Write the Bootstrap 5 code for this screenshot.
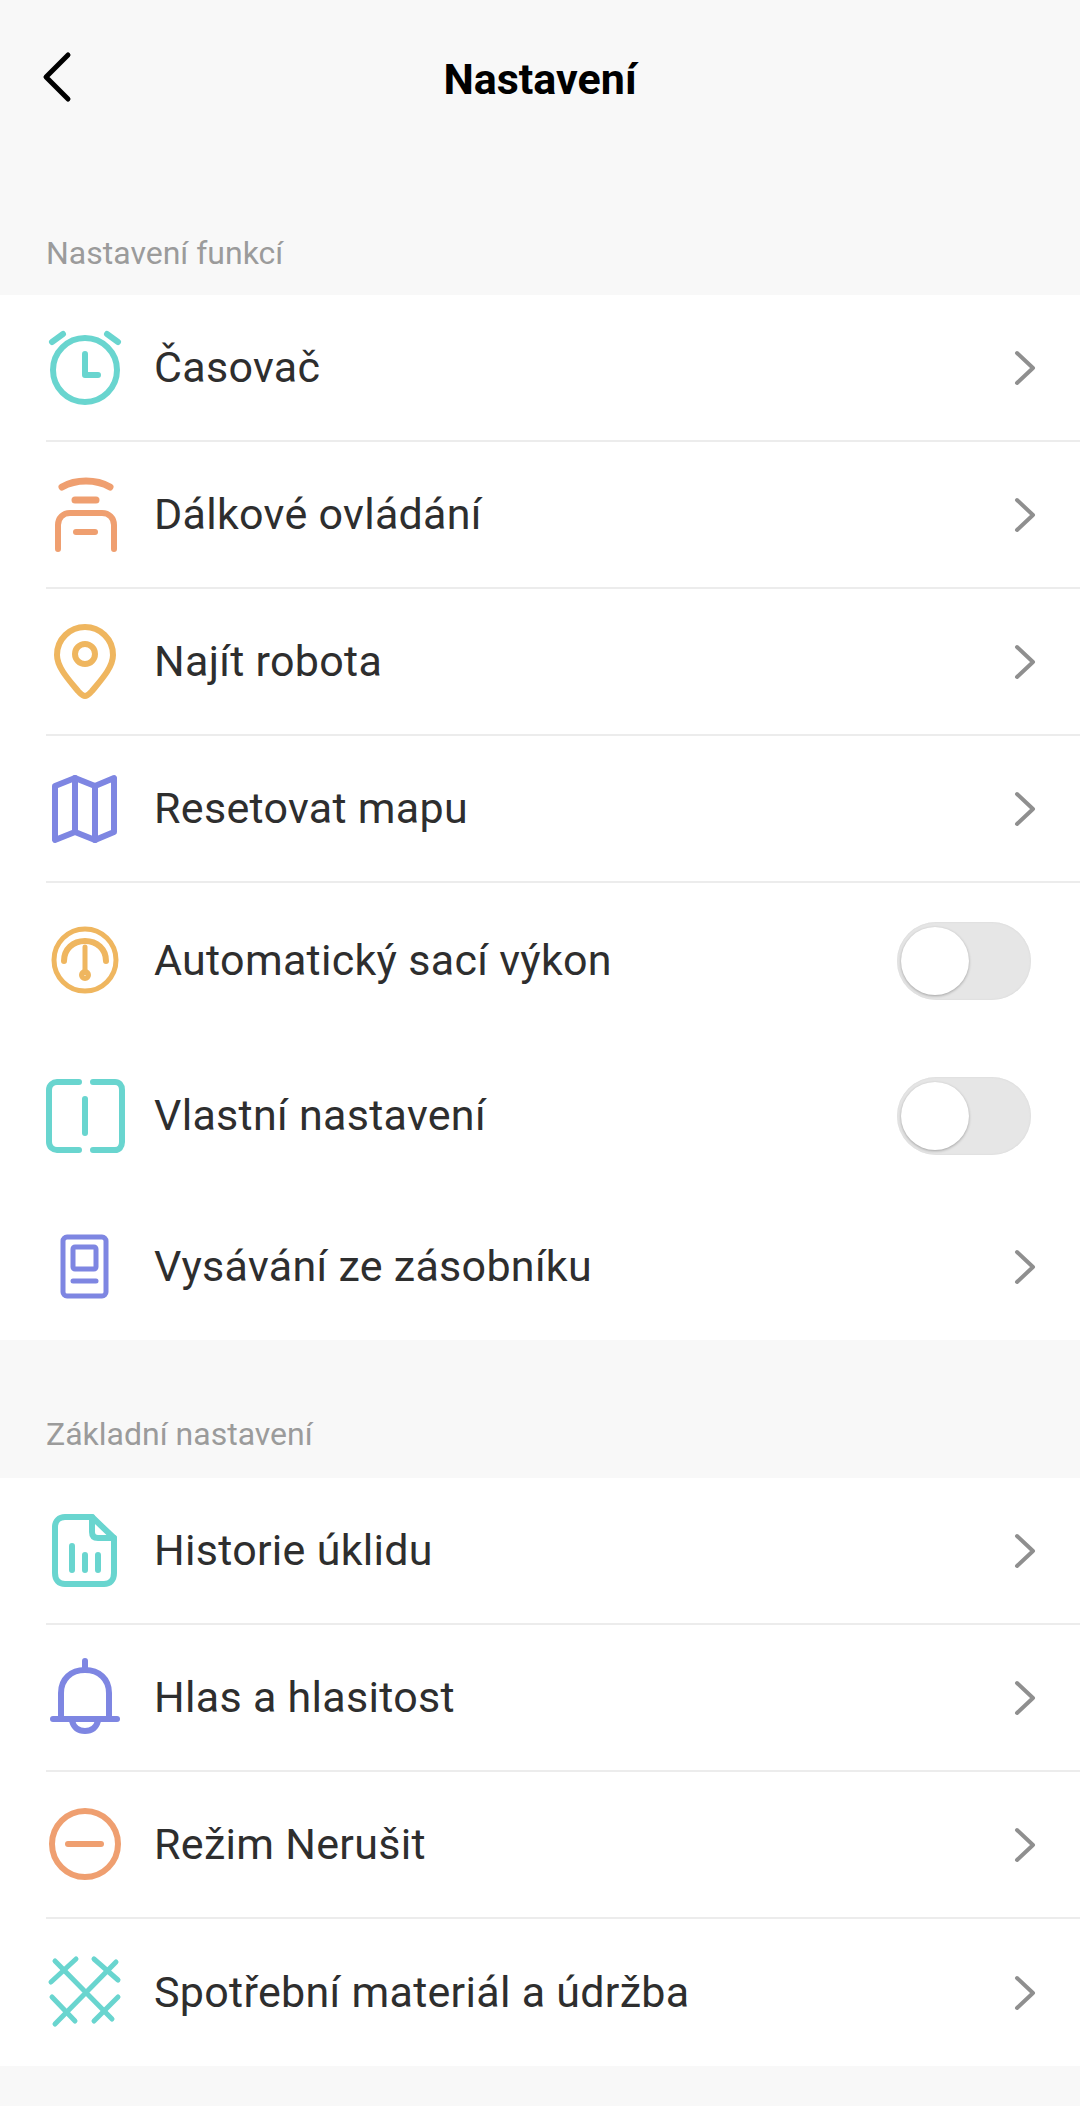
<!DOCTYPE html>
<html lang="cs">
<head>
    <meta charset="UTF-8">
    <meta name="viewport" content="width=device-width, initial-scale=1.0">
    <title>Nastavení</title>
    <link href="https://cdn.jsdelivr.net/npm/bootstrap@5.3.0/dist/css/bootstrap.min.css" rel="stylesheet">
    <style>
        body {
            background-color: #f8f8f8;
            font-family: Roboto, "Liberation Sans", sans-serif;
            color: #2e2e2e;
        }
        .top-bar {
            height: 160px;
            position: relative;
        }
        .top-bar h1 {
            font-size: 43px;
            font-weight: 700;
            color: #000;
            margin: 0;
        }
        .back-btn {
            position: absolute;
            left: 40px;
            top: 50px;
            line-height: 0;
        }
        .group-label {
            font-size: 32px;
            line-height: 40px;
            color: #9b9b9b;
            padding-left: 46px;
        }
        .label-first { height: 135px; padding-top: 73px; }
        .label-second { height: 138px; padding-top: 74px; }
        .setting-group { background: #fff; }
        .setting-row {
            height: 147px;
            margin-left: 46px;
            border-bottom: 2px solid #ececec;
        }
        .setting-row.no-line { border-bottom: 0; }
        .setting-row.switch-row { height: 155px; }
        .row-icon { width: 80px; height: 80px; flex: none; margin-right: 28px; }
        .row-text { font-size: 43px; letter-spacing: .3px; flex-grow: 1; }
        .row-arrow { margin-right: 43px; flex: none; }
        .off-switch {
            width: 134px;
            height: 78px;
            border-radius: 39px;
            background: #e6e6e6;
            margin-right: 49px;
            position: relative;
            flex: none;
            box-shadow: inset 0 0 2px #d4d4d4;
        }
        .off-switch::after {
            content: "";
            position: absolute;
            left: 4px;
            top: 5px;
            width: 68px;
            height: 68px;
            border-radius: 50%;
            background: #fff;
            box-shadow: 0 1px 3px rgba(0, 0, 0, .3);
        }
        svg * { fill: none; stroke-linecap: round; stroke-linejoin: round; }
    </style>
</head>
<body>
    <div class="top-bar d-flex align-items-center justify-content-center">
        <a class="back-btn" href="#">
            <svg width="34" height="54" viewBox="0 0 34 54"><path d="M28 5 L6 27 L28 49" stroke="#000" stroke-width="5"/></svg>
        </a>
        <h1>Nastavení</h1>
    </div>

    <div class="group-label label-first">Nastavení funkcí</div>
    <div class="setting-group">
        <div class="setting-row d-flex align-items-center">
            <svg class="row-icon" viewBox="0 0 80 80" stroke="#69d5cf" stroke-width="6">
                <circle cx="39" cy="42" r="32"/><path d="M39 26V47H52"/><path d="M6 14 17 6M72 14 61 6"/>
            </svg>
            <span class="row-text">Časovač</span>
            <svg class="row-arrow" width="24" height="36" viewBox="0 0 24 36"><path d="M4 3 20 18 4 33" stroke="#8f8f8f" stroke-width="4"/></svg>
        </div>
        <div class="setting-row d-flex align-items-center">
            <svg class="row-icon" viewBox="0 0 80 80" stroke="#ef9f70" stroke-width="6">
                <path d="M16 12C30 4 50 4 64 12" stroke-width="7"/><path d="M29 25H50" stroke-width="7"/><path d="M12 74V50C12 43 17 38 24 38H56C63 38 68 43 68 50V74"/><path d="M30 57H49"/>
            </svg>
            <span class="row-text">Dálkové ovládání</span>
            <svg class="row-arrow" width="24" height="36" viewBox="0 0 24 36"><path d="M4 3 20 18 4 33" stroke="#8f8f8f" stroke-width="4"/></svg>
        </div>
        <div class="setting-row d-flex align-items-center">
            <svg class="row-icon" viewBox="0 0 80 80" stroke="#efb65f" stroke-width="6">
                <path d="M39 74C36 74 34 71 32 69C22 57 11 45 11 33C11 17 24 5 39 5C54 5 67 17 67 33C67 45 56 57 46 69C44 71 42 74 39 74Z"/><circle cx="39" cy="32" r="10"/>
            </svg>
            <span class="row-text">Najít robota</span>
            <svg class="row-arrow" width="24" height="36" viewBox="0 0 24 36"><path d="M4 3 20 18 4 33" stroke="#8f8f8f" stroke-width="4"/></svg>
        </div>
        <div class="setting-row d-flex align-items-center">
            <svg class="row-icon" viewBox="0 0 80 80" stroke="#7e86e2" stroke-width="6">
                <path d="M9 17 29 9 49 17 68 9V63L49 71 29 63 9 71Z"/><path d="M29 9V63M49 17V71"/>
            </svg>
            <span class="row-text">Resetovat mapu</span>
            <svg class="row-arrow" width="24" height="36" viewBox="0 0 24 36"><path d="M4 3 20 18 4 33" stroke="#8f8f8f" stroke-width="4"/></svg>
        </div>
        <div class="setting-row switch-row no-line d-flex align-items-center">
            <svg class="row-icon" viewBox="0 0 80 80" stroke="#efb65f" stroke-width="5">
                <circle cx="39" cy="39" r="31"/><path d="M18 40C18 28 27 20 39 20C51 20 60 28 60 40" stroke-width="6"/><path d="M39 26V52" stroke-width="5"/><circle cx="39" cy="54" r="3.5" stroke-width="5"/>
            </svg>
            <span class="row-text">Automatický sací výkon</span>
            <div class="off-switch"></div>
        </div>
        <div class="setting-row switch-row no-line d-flex align-items-center">
            <svg class="row-icon" viewBox="0 0 80 80" stroke="#69d5cf" stroke-width="6">
                <path d="M33 6H11C7 6 3 9 3 14V66C3 71 7 74 11 74H33M47 6H69C73 6 76 9 76 14V66C76 71 73 74 69 74H47"/><path d="M39 23V57"/>
            </svg>
            <span class="row-text">Vlastní nastavení</span>
            <div class="off-switch"></div>
        </div>
        <div class="setting-row no-line d-flex align-items-center">
            <svg class="row-icon" viewBox="0 0 80 80" stroke="#7e86e2" stroke-width="5">
                <rect x="17" y="10" width="43" height="59" rx="4"/><rect x="27" y="20" width="23" height="22" rx="2"/><path d="M27 54H50"/>
            </svg>
            <span class="row-text">Vysávání ze zásobníku</span>
            <svg class="row-arrow" width="24" height="36" viewBox="0 0 24 36"><path d="M4 3 20 18 4 33" stroke="#8f8f8f" stroke-width="4"/></svg>
        </div>
    </div>

    <div class="group-label label-second">Základní nastavení</div>
    <div class="setting-group">
        <div class="setting-row d-flex align-items-center">
            <svg class="row-icon" viewBox="0 0 80 80" stroke="#69d5cf" stroke-width="6">
                <path d="M46 6H19C13 6 9 10 9 16V62C9 69 13 73 19 73H58C64 73 68 69 68 62V27Z"/><path d="M46 6V21C46 25 48 27 52 27H68"/><path d="M26 35V59M39 44V59M52 44V59"/>
            </svg>
            <span class="row-text">Historie úklidu</span>
            <svg class="row-arrow" width="24" height="36" viewBox="0 0 24 36"><path d="M4 3 20 18 4 33" stroke="#8f8f8f" stroke-width="4"/></svg>
        </div>
        <div class="setting-row d-flex align-items-center">
            <svg class="row-icon" viewBox="0 0 80 80" stroke="#7e86e2" stroke-width="6">
                <path d="M15 61V35C15 21 25 12 39 12C53 12 63 21 63 35V61"/><path d="M39 3V12"/><path d="M7 61H71"/><path d="M26 63C28 70 33 73 39 73C45 73 50 70 52 63"/>
            </svg>
            <span class="row-text">Hlas a hlasitost</span>
            <svg class="row-arrow" width="24" height="36" viewBox="0 0 24 36"><path d="M4 3 20 18 4 33" stroke="#8f8f8f" stroke-width="4"/></svg>
        </div>
        <div class="setting-row d-flex align-items-center">
            <svg class="row-icon" viewBox="0 0 80 80" stroke="#ef9f70" stroke-width="6">
                <circle cx="39" cy="39" r="33"/><path d="M22 39H55"/>
            </svg>
            <span class="row-text">Režim Nerušit</span>
            <svg class="row-arrow" width="24" height="36" viewBox="0 0 24 36"><path d="M4 3 20 18 4 33" stroke="#8f8f8f" stroke-width="4"/></svg>
        </div>
        <div class="setting-row no-line d-flex align-items-center">
            <svg class="row-icon" viewBox="0 0 80 80" stroke="#69d5cf" stroke-width="5">
                <path d="M9 8 66 66M70 9 9 71"/><path d="M30 6 5 29M48 6 72 27M6 44 29 68M72 44 48 68"/>
            </svg>
            <span class="row-text">Spotřební materiál a údržba</span>
            <svg class="row-arrow" width="24" height="36" viewBox="0 0 24 36"><path d="M4 3 20 18 4 33" stroke="#8f8f8f" stroke-width="4"/></svg>
        </div>
    </div>

    <script src="https://cdn.jsdelivr.net/npm/bootstrap@5.3.0/dist/js/bootstrap.bundle.min.js"></script>
</body>
</html>
